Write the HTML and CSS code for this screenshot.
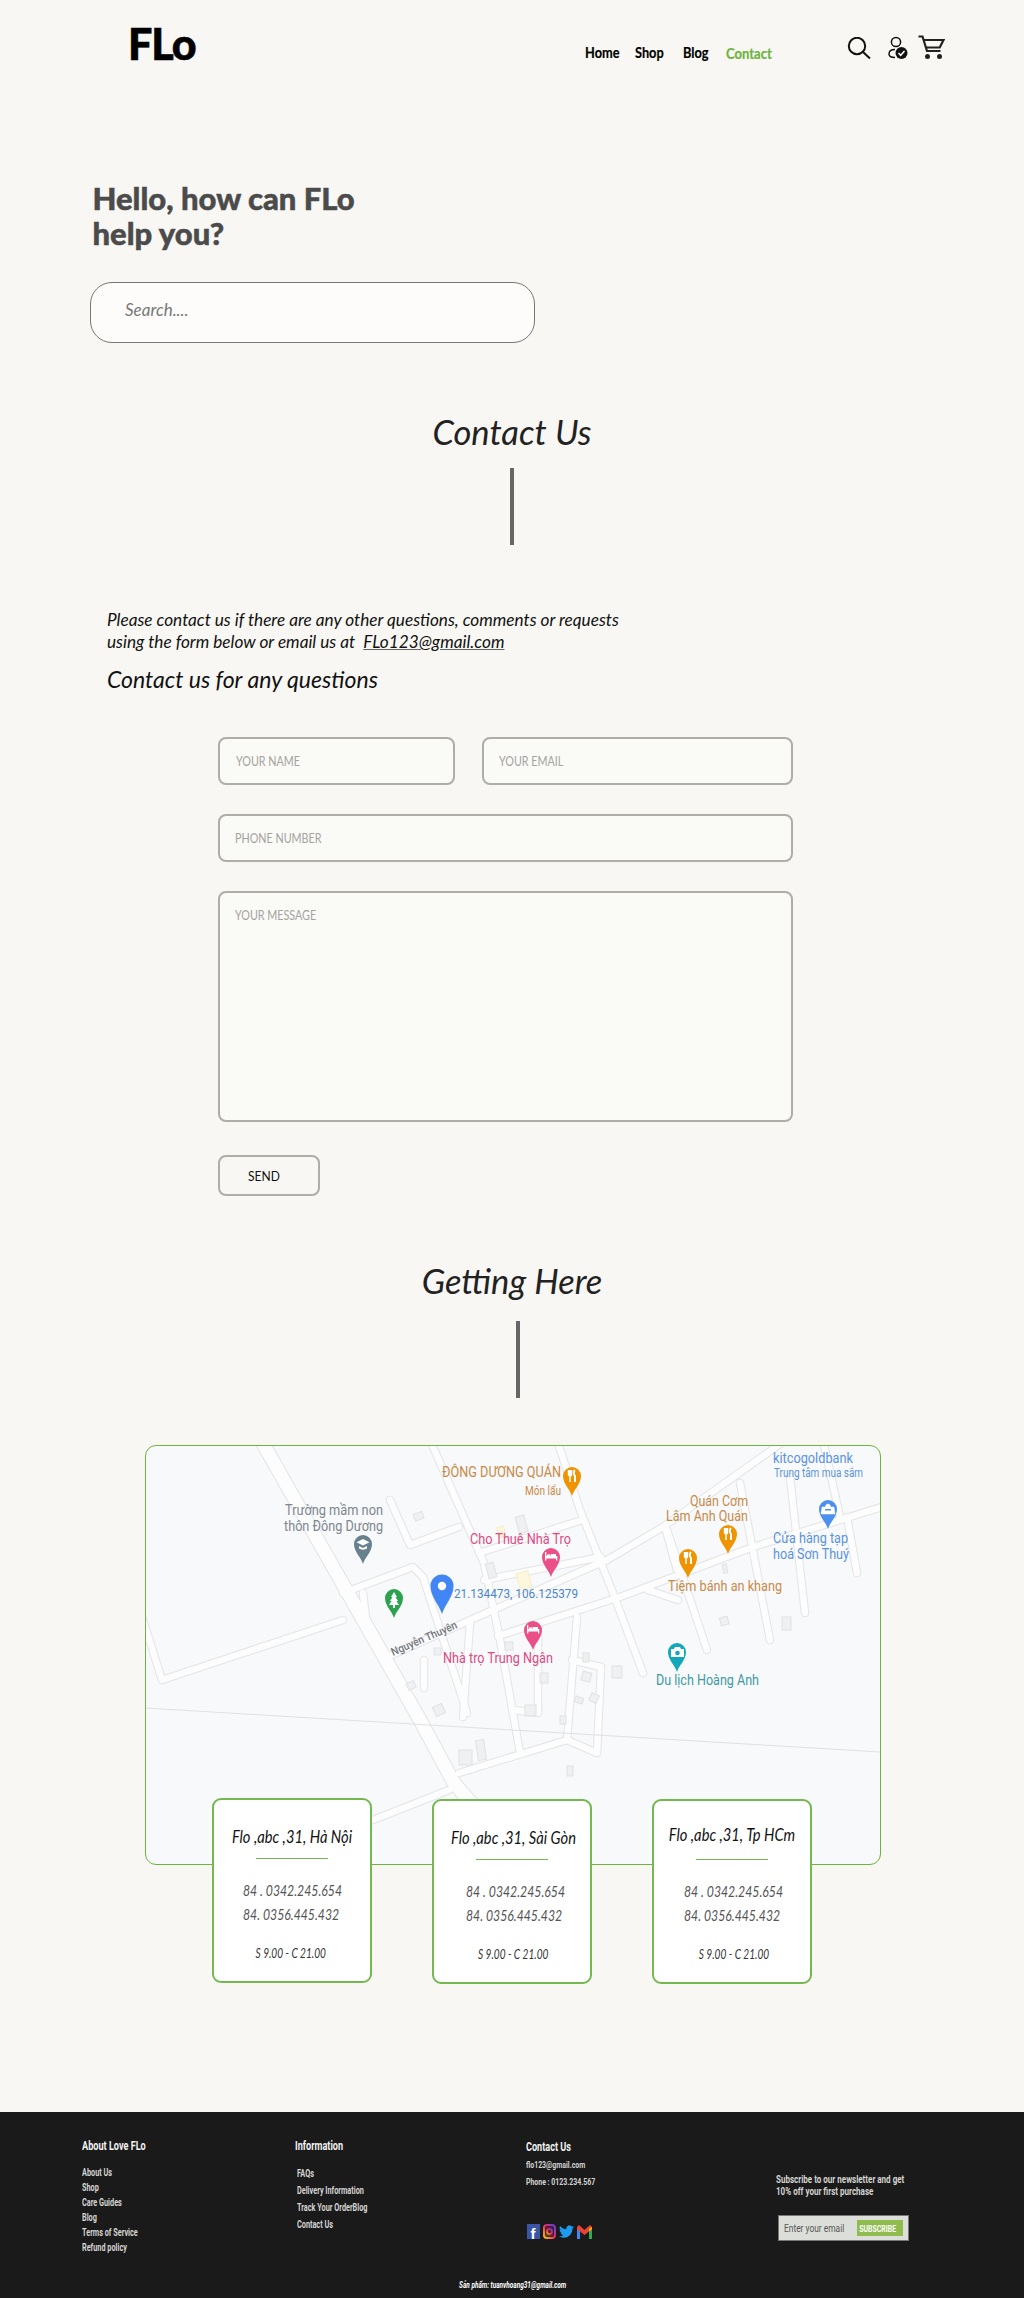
FILE: index.html
```html
<!DOCTYPE html>
<html lang="en">
<head>
<meta charset="utf-8">
<title>FLo - Contact</title>
<link rel="stylesheet" href="styles.css">
</head>
<body>
<header class="top">
  <a class="logo">FLo</a>
  <nav class="nav">
    <a>Home</a><a>Shop</a><a>Blog</a><a class="active">Contact</a>
  </nav>
  <div class="icons">
    <svg class="ic-search" width="24" height="22" viewBox="0 0 24 22" fill="none" stroke="#111" stroke-width="2"><circle cx="10" cy="9" r="8.2"/><path d="M16 15l7 6.5"/></svg>
    <svg class="ic-user" width="20" height="24" viewBox="0 0 20 24" fill="none" stroke="#111" stroke-width="1.5"><circle cx="8" cy="6" r="4.6"/><path d="M7 13.5C3 13.5 1 15.5 1 18c0 2.500 2.500 3.500 6 3.500"/><circle cx="13.500" cy="17" r="6" fill="#111" stroke="none"/><path d="M10.500 17l2.200 2.300 3.800-4.300" stroke="#fff" stroke-width="1.500"/></svg>
    <svg class="ic-cart" width="27" height="25" viewBox="0 0 27 25" fill="none" stroke="#222" stroke-width="2.200"><path d="M0.500 1.500h4l4.500 14.500h13.500"/><path d="M5.500 5H25.500l-3.800 7.500H8"/><circle cx="9.500" cy="21.500" r="2.500" fill="#222" stroke="none"/><circle cx="21.500" cy="21.500" r="2.500" fill="#222" stroke="none"/></svg>
  </div>
</header>

<section class="hero">
  <h1>Hello, how can FLo<br>help you?</h1>
  <div class="search"><span>Search....</span></div>
</section>

<section class="contact">
  <h2 class="title">Contact Us</h2>
  <div class="bar"></div>
  <p class="lead">Please contact us if there are any other questions, comments or requests<br>using the form below or email us at&nbsp; <a>FLo123@gmail.com</a></p>
  <h3 class="sub">Contact us for any questions</h3>
  <form class="form">
    <div class="form-row">
      <div class="field name"><span>YOUR NAME</span></div>
      <div class="field email"><span>YOUR EMAIL</span></div>
    </div>
    <div class="field"><span>PHONE NUMBER</span></div>
    <div class="field message"><span>YOUR MESSAGE</span></div>
    <div class="send"><span>SEND</span></div>
  </form>
</section>

<section class="here">
  <h2 class="title">Getting Here</h2>
  <div class="bar bar-shift"></div>
  <div class="map">
    <svg class="map-svg" viewBox="145 1445 735 419" width="735" height="419">
      <defs>
        <path id="pin" d="M0 29C-2 22-9 17-9 9A9 9 0 0 1 9 9C9 17 2 22 0 29Z"/>
        <g id="fork" fill="none" stroke="#fff" stroke-width="1.500"><path d="M-3.500 3v4.500a1.500 1.500 0 0 0 3 0V3M-2 3v12"/><path d="M3 3c-1.500 1-1.500 5 0 6v6" stroke-width="2"/></g>
        <g id="bed" fill="#fff"><path d="M-6 4h1.300v4h11v4.500H5v-2h-9.700v2H-6z"/><rect x="-4" y="6.500" width="3" height="1.500"/><rect x="-.5" y="6" width="5.500" height="2"/></g>
      </defs>
      <g class="roads-edge">
        <path class="r1" d="M261 1440L420 1720L454 1783L472 1804"/>
        <path d="M343 1620L162 1680L140 1610"/>
        <path d="M343 1593L413 1567L423 1577L467 1713"/>
        <path d="M363 1593L367 1627"/>
        <path d="M387 1657L493 1610L607 1560L663 1527L780 1444"/>
        <path d="M498 1636L620 1597L753 1547L885 1506"/>
        <path d="M430 1440L484 1563L500 1640L520 1753"/>
        <path d="M470 1623L463 1717"/>
        <path d="M557 1440L580 1510L613 1593L643 1673"/>
        <path d="M667 1530L707 1650"/>
        <path d="M648 1590L678 1600"/>
        <path d="M740 1483L770 1640"/>
        <path d="M790 1477L805 1613"/>
        <path d="M823 1440L840 1517"/>
        <path d="M847 1517L857 1573"/>
        <path d="M390 1500L410 1545L459 1527"/>
        <path d="M479 1553L582 1520"/>
        <path d="M484 1580L601 1557"/>
        <path d="M577 1617L567 1740L459 1773"/>
        <path d="M567 1740L597 1753L601 1667L572 1660"/>
        <path d="M538 1633L538 1713L513 1710"/>
        <path d="M449 1790L373 1820"/>
        <path d="M424 1660L424 1688"/>
        <path d="M665 1527L677 1570"/>
      </g>
      <g class="roads">
        <path class="r1" d="M261 1440L420 1720L454 1783L472 1804"/>
        <path d="M343 1620L162 1680L140 1610"/>
        <path d="M343 1593L413 1567L423 1577L467 1713"/>
        <path d="M363 1593L367 1627"/>
        <path d="M387 1657L493 1610L607 1560L663 1527L780 1444"/>
        <path d="M498 1636L620 1597L753 1547L885 1506"/>
        <path d="M430 1440L484 1563L500 1640L520 1753"/>
        <path d="M470 1623L463 1717"/>
        <path d="M557 1440L580 1510L613 1593L643 1673"/>
        <path d="M667 1530L707 1650"/>
        <path d="M648 1590L678 1600"/>
        <path d="M740 1483L770 1640"/>
        <path d="M790 1477L805 1613"/>
        <path d="M823 1440L840 1517"/>
        <path d="M847 1517L857 1573"/>
        <path d="M390 1500L410 1545L459 1527"/>
        <path d="M479 1553L582 1520"/>
        <path d="M484 1580L601 1557"/>
        <path d="M577 1617L567 1740L459 1773"/>
        <path d="M567 1740L597 1753L601 1667L572 1660"/>
        <path d="M538 1633L538 1713L513 1710"/>
        <path d="M449 1790L373 1820"/>
        <path d="M424 1660L424 1688"/>
        <path d="M665 1527L677 1570"/>
      </g>
      <path class="power" d="M145 1708L880 1752"/>
      <g class="bld">
        <rect x="414" y="1513" width="9" height="7" transform="rotate(-20 418 1516)"/>
        <rect x="517" y="1516" width="9" height="17" transform="rotate(-15 521 1524)"/>
        <rect x="487" y="1563" width="8" height="15" transform="rotate(-15 491 1570)"/>
        <rect x="434" y="1648" width="7" height="7"/>
        <rect x="407" y="1682" width="8" height="7" transform="rotate(-25 411 1685)"/>
        <rect x="434" y="1705" width="10" height="10" transform="rotate(-25 439 1710)"/>
        <rect x="505" y="1642" width="8" height="8"/>
        <rect x="540" y="1673" width="8" height="10"/>
        <rect x="583" y="1653" width="6" height="9"/>
        <rect x="612" y="1666" width="10" height="12"/>
        <rect x="582" y="1672" width="9" height="9" transform="rotate(15 586 1676)"/>
        <rect x="575" y="1697" width="8" height="6" transform="rotate(20 579 1700)"/>
        <rect x="590" y="1694" width="8" height="8" transform="rotate(25 594 1698)"/>
        <rect x="525" y="1705" width="11" height="11"/>
        <rect x="560" y="1716" width="6" height="8"/>
        <rect x="459" y="1750" width="13" height="15"/>
        <rect x="477" y="1740" width="8" height="20" transform="rotate(-8 481 1750)"/>
        <rect x="567" y="1766" width="6" height="10"/>
        <rect x="720" y="1617" width="8" height="8" transform="rotate(-15 724 1620)"/>
        <rect x="782" y="1617" width="9" height="13"/>
        <rect x="723" y="1564" width="4" height="9" transform="rotate(-10 725 1568)"/>
      </g>
      <g class="yel">
        <rect x="498" y="1527" width="7" height="10" transform="rotate(-15 501 1532)"/>
        <rect x="518" y="1572" width="12" height="17" transform="rotate(-15 524 1580)"/>
      </g>

      <use href="#pin" x="572" y="1467" fill="#ef9300"/>
      <use href="#fork" x="572" y="1467"/>
      <use href="#pin" x="363" y="1535" fill="#67808e"/>
      <path d="M363 1539l6.500 3.300-6.500 3.200-6.500-3.200zM359 1546l4 2 4-2v2.500c-2.500 1.500-5.500 1.500-8 0z" fill="#fff"/>
      <use href="#pin" x="551" y="1548" fill="#ea4f88"/>
      <use href="#bed" x="551" y="1548"/>
      <use href="#pin" x="394" y="1589" fill="#2ca24f"/>
      <path d="M394 1592l3 5h-1.500l2.500 4h-1.500l2.500 4h-4v3h-2v-3h-4l2.500-4h-1.500l2.500-4h-1.500z" fill="#fff"/>
      <path d="M442 1614C439 1604 430.500 1597 430.500 1586A11.500 11.500 0 0 1 453.500 1586C453.500 1597 445 1604 442 1614Z" fill="#4285f4"/>
      <circle cx="442" cy="1586" r="4.200" fill="#fff"/>
      <use href="#pin" x="533" y="1621" fill="#ea4f88"/>
      <use href="#bed" x="533" y="1621"/>
      <use href="#pin" x="728" y="1525" fill="#ef9300"/>
      <use href="#fork" x="728" y="1525"/>
      <use href="#pin" x="688" y="1549" fill="#ef9300"/>
      <use href="#fork" x="688" y="1549"/>
      <use href="#pin" x="828" y="1500" fill="#4d8fef"/>
      <path d="M822 1507h12l1 7h-14zM825.500 1507c0-4 5-4 5 0" fill="#fff" stroke="#fff" stroke-width=".5"/>
      <rect x="825" y="1509" width="6" height="1.500" fill="#4d8fef"/>
      <use href="#pin" x="677" y="1643" fill="#13a7bb"/>
      <path d="M671 1649h3l1-2h5l1 2h3v8h-13z" fill="#fff"/>
      <circle cx="677.500" cy="1653" r="2.300" fill="#13a7bb"/>

      <g class="lbl">
        <text class="orange" x="442" y="1477" textLength="119" lengthAdjust="spacingAndGlyphs">ĐÔNG DƯƠNG QUÁN</text>
        <text class="orange small" x="525" y="1495" textLength="36" lengthAdjust="spacingAndGlyphs">Món lẩu</text>
        <text class="gray" x="285" y="1515" textLength="98" lengthAdjust="spacingAndGlyphs">Trường mầm non</text>
        <text class="gray" x="284" y="1531" textLength="99" lengthAdjust="spacingAndGlyphs">thôn Đông Dương</text>
        <text class="pink" x="470" y="1544" textLength="101" lengthAdjust="spacingAndGlyphs">Cho Thuê Nhà Trọ</text>
        <text class="blue" x="454" y="1598" textLength="124" lengthAdjust="spacingAndGlyphs">21.134473, 106.125379</text>
        <text class="pink" x="443" y="1663" textLength="110" lengthAdjust="spacingAndGlyphs">Nhà trọ Trung Ngân</text>
        <text class="sky" x="773" y="1463" textLength="80" lengthAdjust="spacingAndGlyphs">kitcogoldbank</text>
        <text class="sky small" x="774" y="1477" textLength="89" lengthAdjust="spacingAndGlyphs">Trung tâm mua sắm</text>
        <text class="orange" x="690" y="1506" textLength="58" lengthAdjust="spacingAndGlyphs">Quán Cơm</text>
        <text class="orange" x="666" y="1521" textLength="82" lengthAdjust="spacingAndGlyphs">Lâm Anh Quán</text>
        <text class="sky" x="773" y="1543" textLength="75" lengthAdjust="spacingAndGlyphs">Cửa hàng tạp</text>
        <text class="sky" x="773" y="1559" textLength="76" lengthAdjust="spacingAndGlyphs">hoá Sơn Thuý</text>
        <text class="orange" x="668" y="1591" textLength="114" lengthAdjust="spacingAndGlyphs">Tiệm bánh an khang</text>
        <text class="teal" x="656" y="1685" textLength="103" lengthAdjust="spacingAndGlyphs">Du lịch Hoàng Anh</text>
        <text class="road-name" transform="translate(393 1656) rotate(-23.500)" textLength="71" lengthAdjust="spacingAndGlyphs">Nguyễn Thuyên</text>
      </g>
    </svg>
  </div>
  <div class="cards">
    <article class="card card-a">
      <h4>Flo ,abc ,31, Hà Nội</h4>
      <div class="rule"></div>
      <p class="phones">84 . 0342.245.654<br>84. 0356.445.432</p>
      <p class="hours">S 9.00 -  C 21.00</p>
    </article>
    <article class="card card-b">
      <h4>Flo ,abc ,31, Sài Gòn</h4>
      <div class="rule"></div>
      <p class="phones">84 . 0342.245.654<br>84. 0356.445.432</p>
      <p class="hours">S 9.00 -  C 21.00</p>
    </article>
    <article class="card card-c">
      <h4>Flo ,abc ,31, Tp HCm</h4>
      <div class="rule"></div>
      <p class="phones">84 . 0342.245.654<br>84. 0356.445.432</p>
      <p class="hours">S 9.00 -  C 21.00</p>
    </article>
  </div>
</section>

<footer class="foot">
  <div class="foot-cols">
    <div class="col col-about">
      <h5>About Love FLo</h5>
      <ul>
        <li>About Us</li><li>Shop</li><li>Care Guides</li><li>Blog</li><li>Terms of Service</li><li>Refund policy</li>
      </ul>
    </div>
    <div class="col col-info">
      <h5>Information</h5>
      <ul>
        <li>FAQs</li><li>Delivery Information</li><li>Track Your OrderBlog</li><li>Contact Us</li>
      </ul>
    </div>
    <div class="col col-contact">
      <h5>Contact Us</h5>
      <p>flo123@gmail.com</p>
      <p>Phone : 0123.234.567</p>
      <div class="social">
        <svg width="13" height="15" viewBox="0 0 13 15"><rect width="13" height="15" fill="#3b55a5"/><text x="6" y="14.500" class="fb">f</text></svg>
        <svg width="13" height="15" viewBox="0 0 13 15"><defs><linearGradient id="ig" x1="0" y1="1" x2="1" y2="0"><stop offset="0" stop-color="#fdc30f"/><stop offset=".5" stop-color="#ee2a6b"/><stop offset="1" stop-color="#5d3fd3"/></linearGradient></defs><rect x="1" y="1" width="11" height="13" rx="3" fill="none" stroke="url(#ig)" stroke-width="2"/><circle cx="6.500" cy="7.500" r="2.500" fill="none" stroke="url(#ig)" stroke-width="1.500"/><rect x="2.500" y="2.500" width="8" height="10" rx="1.500" fill="url(#ig)" fill-opacity=".35"/></svg>
        <svg width="15" height="15" viewBox="0 0 24 24"><path fill="#1d9bf0" d="M23.900 4.600c-.9.400-1.800.7-2.800.8 1-.6 1.800-1.600 2.200-2.700-1 .6-2 1-3.100 1.200A4.900 4.900 0 0 0 11.800 8.400C7.700 8.200 4.100 6.300 1.700 3.300a4.900 4.900 0 0 0 1.500 6.600c-.8 0-1.600-.2-2.200-.6v.1c0 2.400 1.700 4.400 3.900 4.800-.7.200-1.500.2-2.200.1.600 2 2.400 3.400 4.600 3.400A9.900 9.900 0 0 1 0 19.700a14 14 0 0 0 7.500 2.200c9.100 0 14-7.500 14-14v-.6c1-.7 1.800-1.600 2.400-2.700z"/></svg>
        <svg width="15" height="14" viewBox="0 0 15 14"><path fill="#4285f4" d="M0 2h3v12H0z"/><path fill="#34a853" d="M12 2h3v12h-3z"/><path fill="#ea4335" d="M0 2l2-2 5.500 5L13 0l2 2v2l-7.500 6L0 4z"/><path fill="#fbbc04" d="M12 4l3-2v2l-3 2.400z"/></svg>
      </div>
    </div>
    <div class="col col-news">
      <p class="news-text">Subscribe to our newsletter and get<br>10% off your first purchase</p>
      <div class="news-box"><span>Enter your email</span><b><i>SUBSCRIBE</i></b></div>
    </div>
  </div>
  <p class="credit">Sản phẩm: tuanvhoang31@gmail.com</p>
</footer>
</body>
</html>
```

FILE: styles.css
```css
* { box-sizing: border-box; }
html, body { margin: 0; padding: 0; }
body {
  width: 1024px;
  height: 2298px;
  background: #f8f7f3;
  font-family: "Lato", "Open Sans", sans-serif;
  color: #111;
  overflow: hidden;
}
h1, h2, h3, h4, h5, p, ul { margin: 0; padding: 0; }
ul { list-style: none; }

/* header */
.top { display: flex; height: 88px; align-items: flex-start; }
.logo {
  margin: 17px 0 0 128px;
  width: 457px;
  font-size: 43px;
  font-weight: 900;
  line-height: 54px;
  color: #000;
  letter-spacing: -1px;
  -webkit-text-stroke: .6px #000;
}
.nav {
  display: grid;
  grid-template-columns: 50px 48px 43px 121px;
  padding-top: 44px;
  font-size: 14.500px;
  font-weight: 700;
  line-height: 18px;
  width: 262px;
  -webkit-text-stroke: .2px;
}
.nav a { color: #000; display: block; transform: scaleX(.88); transform-origin: left center; }
.nav a.active { color: #6cb33f; transform: scaleX(.9) translateY(1px); }
.icons { display: flex; align-items: flex-start; padding-top: 35px; }
.ic-search { margin-top: 2px; }
.ic-user { margin-left: 17px; margin-top: 1px; }
.ic-cart { margin-left: 10px; }

/* hero */
.hero { padding: 93px 0 0 90px; }
.hero h1 { margin-left: 2.500px; font-size: 31px; font-weight: 900; line-height: 35px; color: #4b4b4b; -webkit-text-stroke: .5px #4b4b4b; }
.search {
  margin-top: 31px;
  width: 445px;
  height: 61px;
  border: 1px solid #777;
  border-radius: 22px;
  background: #fdfcfa;
  padding: 15px 0 0 34px;
  font-size: 17px;
  font-style: italic;
  color: #777;
  line-height: 24px;
}

/* section headings */
.contact { padding-top: 67px; }
.title { text-align: center; font-size: 34.500px; font-weight: 400; font-style: italic; line-height: 44px; color: #222; }
.bar { width: 4px; height: 77px; margin: 14px auto 0; background: #666; }
.bar-shift { transform: translateX(6px); }

.lead { margin: 64px 0 0 107px; font-size: 17.200px; font-style: italic; line-height: 22px; color: #111; }
.lead a { text-decoration: underline; text-decoration-color: #666; }
.sub { margin: 10px 0 0 107px; font-size: 24px; font-style: italic; font-weight: 400; line-height: 32px; color: #111; transform: scaleX(.96); transform-origin: left center; }

/* form */
.form { margin: 42px 0 0 218px; width: 575px; display: flex; flex-direction: column; gap: 29px; }
.form-row { display: flex; gap: 27px; }
.field {
  height: 48px;
  border: 2px solid #aeada8;
  border-radius: 8px;
  background: #fafaf6;
  padding: 14px 15px;
  font-size: 12.500px;
  line-height: 18px;
  color: #a3a3a0;
}
.field span, .send span { display: inline-block; transform: scaleX(.86); transform-origin: left center; white-space: nowrap; }
.field.name { width: 237px; }
.field.name span { margin-left: 1px; }
.field.email { width: 311px; }
.field.message { height: 231px; }
.send {
  width: 102px;
  height: 41px;
  margin-top: 4px;
  border: 2px solid #aeada8;
  border-radius: 8px;
  padding: 9px 0 0 28px;
  font-size: 14px;
  line-height: 20px;
  color: #111;
}

/* getting here */
.here { padding-top: 63px; }
.here .bar { margin-top: 18px; }
.map {
  margin: 47px 0 0 145px;
  width: 736px;
  height: 420px;
  border: 1.500px solid #6db33f;
  border-radius: 11px;
  background: #f8f9fb;
  overflow: hidden;
}
.map-svg { display: block; margin: -1px 0 0 -1px; }
.roads-edge path { fill: none; stroke: #e3e4e7; stroke-width: 8.500; stroke-linejoin: round; stroke-linecap: round; }
.roads path { fill: none; stroke: #fdfdfe; stroke-width: 6.500; stroke-linejoin: round; stroke-linecap: round; }
.roads-edge .r1 { stroke-width: 15; }
.roads .r1 { stroke-width: 13; }
.power { fill: none; stroke: #dfe0e3; stroke-width: 1; }
.bld rect { fill: #eef0f2; stroke: #dfe1e4; stroke-width: 1; }
.yel rect { fill: #fdf7de; stroke: #f6eec8; stroke-width: 1; }
.lbl text { font-family: "Roboto", sans-serif; font-size: 14px; }
.lbl .small { font-size: 12px; }
.lbl .orange { fill: #c98a48; }
.lbl .gray { fill: #7d878e; }
.lbl .pink { fill: #de4a83; }
.lbl .blue { fill: #4a86cf; font-size: 13.500px; }
.lbl .sky { fill: #5a93e0; }
.lbl .teal { fill: #3d9aa3; }
.lbl .road-name { fill: #72767a; font-size: 11px; font-weight: 500; }

/* cards */
.cards { display: flex; margin: -67px 0 0 212px; gap: 60px; position: relative; }
.card {
  width: 160px;
  height: 185px;
  background: #fff;
  border: 2px solid #73b94f;
  border-radius: 9px;
  text-align: center;
  padding-top: 24px;
}
.card-b, .card-c { margin-top: 1px; }
.card h4 { font-size: 17.500px; font-style: italic; font-weight: 400; line-height: 26px; color: #111; white-space: nowrap; transform: scaleX(.84); }
.card-b h4 { margin-left: 3px; }
.card-c h4 { margin-top: -3px; }
.rule { width: 72px; height: 1px; margin: 8px auto 0; background: #74b653; }
.card-c .rule { margin-top: 11px; }
.phones { margin: 20px 0 0 29px; font-size: 15.500px; font-style: italic; line-height: 23.500px; color: #555; text-align: left; white-space: nowrap; transform: scaleX(.79); transform-origin: left center; }
.hours { margin-top: 20px; font-size: 12.500px; font-style: italic; color: #333; line-height: 16px; white-space: nowrap; transform: scaleX(.81); }
.card-a .hours { padding-right: 3px; }
.card-b .hours { padding-left: 3px; }
.card-c .hours { padding-left: 5px; }
.card-b .phones { margin-left: 32px; }
.card-c .phones { margin-left: 30px; }

/* footer */
.foot { margin-top: 128px; height: 186px; background: #1a1a1a; color: #d4d4d2; font-family: "Roboto", sans-serif; position: relative; }
.foot-cols { display: flex; padding: 27px 0 0 82px; }
.col h5, .col li, .col p, .news-box span, .news-box i { transform: scaleX(.73); transform-origin: left center; white-space: nowrap; display: block; }
.col h5 { font-size: 12.500px; font-weight: 700; line-height: 14px; color: #f2f2f2; }
.col li { font-size: 10px; font-weight: 700; line-height: 15px; }
.col-about { width: 213px; }
.col-about ul { margin-top: 12px; }
.col-info { width: 231px; }
.col-info ul { margin: 12px 0 0 2px; }
.col-info li { line-height: 17px; }
.col-contact { width: 250px; }
.col-contact h5 { margin-top: 1px; }
.col-contact p { font-size: 9.500px; font-weight: 700; line-height: 17px; }
.col-contact h5 + p { margin-top: 2px; }
.social { display: flex; gap: 3px; margin: 34px 0 0 1px; align-items: center; }
.social svg { overflow: visible; }
.fb { font-family: "Liberation Sans", sans-serif; font-weight: 700; font-size: 15px; fill: #fff; text-anchor: middle; }
.col-news { padding-top: 35px; }
.news-text { font-size: 11px; font-weight: 700; line-height: 12px; }
.news-box {
  display: flex;
  align-items: center;
  justify-content: flex-start;
  width: 131px;
  height: 26px;
  margin: 17px 0 0 2px;
  padding: 0 5px;
  background: #dcdfd9;
  border: 1.500px solid #777;
  color: #555;
  font-size: 11.500px;
}
.news-box span { flex: 0 0 73px; min-width: 0; }
.news-box b { display: block; flex: 0 0 46px; height: 16px; background: #8fbc4f; color: #fff; overflow: hidden; }
.news-box i { font-style: normal; font-size: 9.500px; line-height: 17px; padding-left: 3px; }
.credit { position: absolute; left: 0; right: 0; bottom: 7px; padding-left: 2px; text-align: center; font-size: 9.500px; font-style: italic; font-weight: 700; color: #fff; line-height: 12px; transform: scaleX(.68); }
```
